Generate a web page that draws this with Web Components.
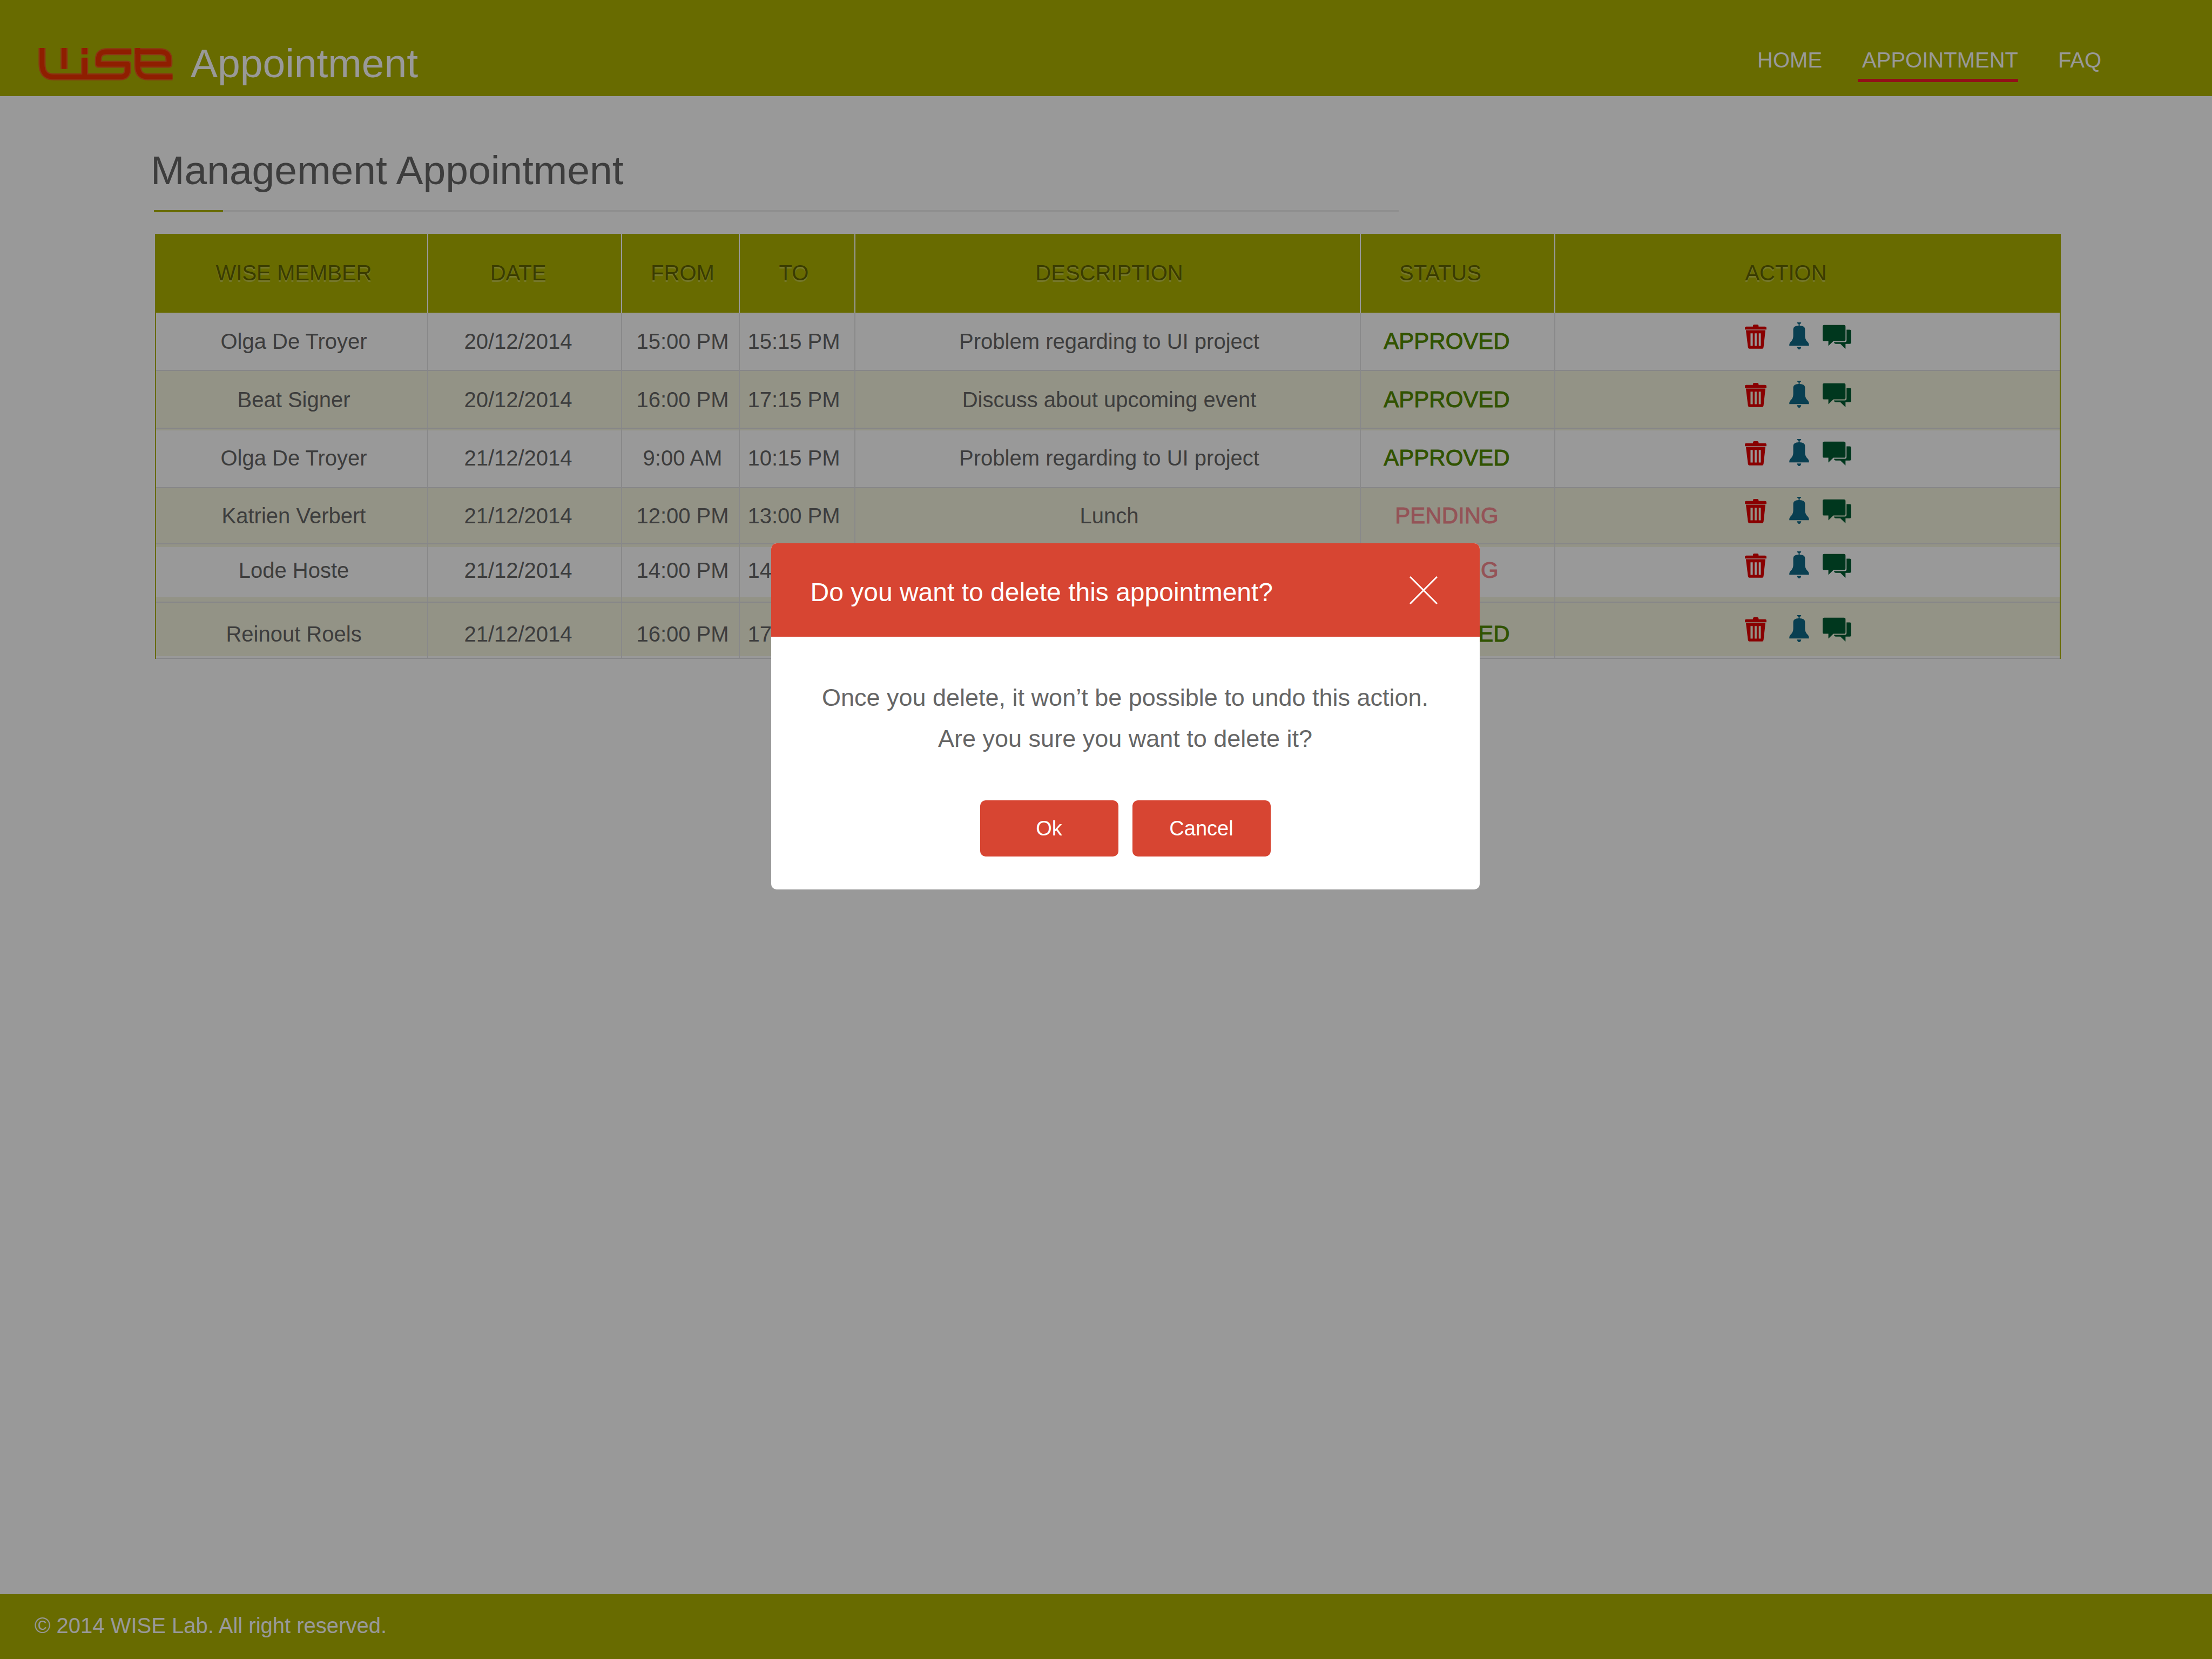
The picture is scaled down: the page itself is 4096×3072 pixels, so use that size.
<!DOCTYPE html>
<html lang="en">
<head>
<meta charset="utf-8">
<meta name="viewport" content="width=device-width, initial-scale=1">
<title>WISE Appointment</title>
<style>
  html, body { margin: 0; }
  body {
    font-family: "Liberation Sans", Arial, Helvetica, sans-serif;
    font-size: 40px;
    color: #666;
    background: #fff;
    --olive: #adb300;
    --red: #d74532;
  }
</style>
</head>
<body>

<wise-app>
  <wise-header slot="header">
    <wise-nav-link href="#home">HOME</wise-nav-link>
    <wise-nav-link href="#appointment" active>APPOINTMENT</wise-nav-link>
    <wise-nav-link href="#faq">FAQ</wise-nav-link>
  </wise-header>
  <section-title>Management Appointment</section-title>
  <appointment-table></appointment-table>
  <wise-footer slot="footer">© 2014 WISE Lab. All right reserved.</wise-footer>
</wise-app>

<confirm-dialog>
  <span slot="title">Do you want to delete this appointment?</span>
  <p-line>Once you delete, it won’t be possible to undo this action.</p-line>
  <p-line>Are you sure you want to delete it?</p-line>
  <wise-button slot="actions">Ok</wise-button>
  <wise-button slot="actions">Cancel</wise-button>
</confirm-dialog>

<script>
  const define = (name, html, setup) => {
    const template = document.createElement('template');
    template.innerHTML = html;
    customElements.define(name, class extends HTMLElement {
      constructor() {
        super();
        this.attachShadow({ mode: 'open' }).append(template.content.cloneNode(true));
      }
      connectedCallback() { if (setup) setup(this, this.shadowRoot); }
    });
  };

  define('wise-app', `
    <style>
      :host { display: flex; flex-direction: column; min-height: 100vh; }
      main { flex: 1; padding: 92px 280px 0 287px; }
    </style>
    <slot name="header"></slot>
    <main><slot></slot></main>
    <slot name="footer"></slot>`);

  define('wise-logo', `
    <style>
      :host { display: block; padding-top: 4px; }
      svg { display: block; width: 249px; height: 60px; }
    </style>
    <svg viewBox="30 24 777 188" role="img" aria-label="WISE">
      <defs>
        <g id="mark" fill="none" stroke-linejoin="round">
          <path d="M50 24V115Q50 191 115 191H505Q547 191 547 145V118H377V90Q377 45 425 45H568"/>
          <path d="M178 24V145"/>
          <path d="M297 80V191"/>
          <path d="M297 24V60"/>
          <path d="M605 24V125Q605 191 665 191H807"/>
          <path d="M590 45H735Q786 45 786 95V118H605"/>
        </g>
      </defs>
      <use href="#mark" stroke="#e85a1e" stroke-width="41"/>
      <use href="#mark" stroke="#ee3300" stroke-width="27"/>
    </svg>`);

  define('wise-header', `
    <style>
      :host {
        display: flex; justify-content: space-between; align-items: center;
        box-sizing: border-box; height: 178px;
        padding: 56px 205px 0 71px;
        background: var(--olive); color: #fff;
      }
      .brand { display: flex; align-items: center; gap: 33px; font-size: 75px; line-height: 80px; }
      nav { display: flex; gap: 66px; padding-top: 4px; }
    </style>
    <div class="brand"><wise-logo></wise-logo><span>Appointment</span></div>
    <nav><slot></slot></nav>`);

  define('wise-nav-link', `
    <style>
      :host { display: block; }
      a {
        display: block; padding: 0 0 11px 8px;
        font-size: 40px; line-height: 48px;
        color: #fff; text-decoration: none;
        border-bottom: 6px solid transparent;
      }
      :host([active]) a { border-color: #f41c28; }
    </style>
    <a><slot></slot></a>`, (host, root) => {
      root.querySelector('a').href = host.getAttribute('href');
    });

  define('section-title', `
    <style>
      :host { display: block; margin-bottom: 40px; }
      h1 { margin: 0 0 29px -8px; font-size: 75px; line-height: 90px; font-weight: 400; }
      .rule { max-width: 2305px; margin-left: -2px; height: 4px; background: #efefef; }
      .rule::before { content: ""; display: block; width: 128px; height: 4px; background: var(--olive); }
    </style>
    <h1><slot></slot></h1>
    <div class="rule"></div>`);

  define('row-actions', `
    <style>
      :host { display: flex; align-items: center; justify-content: center; padding-bottom: 20px; }
      button { display: block; margin: 0; padding: 0; border: 0; background: none; cursor: pointer; }
      svg { display: block; height: 50px; }
      .trash { margin-right: 42px; }
      .trash svg { width: 40px; }
      .bell { margin-right: 25px; }
      .bell svg { width: 37px; }
      .chat svg { width: 53px; }
    </style>
    <button class="trash" type="button" aria-label="Delete">
      <svg viewBox="51 39 126 156" fill="#e40000">
        <path d="M98 63V57Q99 51 105 51H124Q130 51 131 57V63H169Q177 63 177 70V80H51V70Q51 63 59 63Z"/>
        <path fill-rule="evenodd" d="M57 84H171L160 182Q158 192 149 192H80Q71 192 69 182ZM84 102V175H97V102ZM108 102V175H120V102ZM132 102V175H144V102Z"/>
      </svg>
    </button>
    <button class="bell" type="button" aria-label="Remind">
      <svg viewBox="306 39 114 156" fill="#0f6a88">
        <path d="M351 39H375Q375 46 366 50V58Q396 59 397 78V115C397 138 406 146 415 155Q420 160 420 174H306Q306 160 311 155C320 146 329 138 329 115V78Q330 59 360 58V50Q351 46 351 39Z"/>
        <path d="M351 180H375Q373 195 363 195Q353 195 351 180Z"/>
      </svg>
    </button>
    <button class="chat" type="button" aria-label="Comment">
      <svg viewBox="498 39 165 156" fill="#005c33">
        <path d="M507 54H621Q630 54 630 63V138Q630 147 621 147H560L531 175V147H507Q498 147 498 138V63Q498 54 507 54Z"/>
        <path d="M636 81H654Q663 81 663 90V154Q663 163 654 163H630V192L600 163H574Q566 163 563 153H626Q636 153 636 143Z"/>
      </svg>
    </button>`);

  define('status-badge', `
    <style>
      :host { font-size: 42px; -webkit-text-stroke: 1px currentColor; color: #528a00; }
      :host([kind="PENDING"]) { color: #f78b92; }
    </style>
    <slot></slot>`);

  const appointments = [
    ['Olga De Troyer', '20/12/2014', '15:00 PM', '15:15 PM', 'Problem regarding to UI project', 'APPROVED'],
    ['Beat Signer', '20/12/2014', '16:00 PM', '17:15 PM', 'Discuss about upcoming event', 'APPROVED'],
    ['Olga De Troyer', '21/12/2014', '9:00 AM', '10:15 PM', 'Problem regarding to UI project', 'APPROVED'],
    ['Katrien Verbert', '21/12/2014', '12:00 PM', '13:00 PM', 'Lunch', 'PENDING'],
    ['Lode Hoste', '21/12/2014', '14:00 PM', '14:15 PM', '', 'PENDING'],
    ['Reinout Roels', '21/12/2014', '16:00 PM', '17:15 PM', '', 'APPROVED']
  ];

  define('appointment-table', `
    <style>
      :host { display: block; --stripe: #f6f5df; }
      table {
        width: 100%; table-layout: fixed; border-collapse: separate; border-spacing: 0;
        box-sizing: border-box; border: solid var(--olive); border-width: 0 2px;
        font-size: 40px; line-height: 46px;
      }
      th, td { box-sizing: border-box; padding: 0; text-align: center; vertical-align: middle; white-space: nowrap; font-weight: 400; }
      th {
        height: 146px; padding-bottom: 3px; background: var(--olive); color: #626400;
        border-right: 2px solid #fff; text-shadow: 0 3px 1px rgba(255, 255, 255, .3);
      }
      td { border-right: 2px solid #e4e4e6; border-bottom: 2px solid #e0e0e3; }
      th:last-child, td:last-child { border-right: 0; }
      .member { width: 504px; padding-left: 8px; }
      .date { width: 359px; padding-right: 24px; }
      .from { width: 218px; padding-left: 8px; }
      .to { width: 214px; padding-right: 12px; }
      .text { width: 936px; padding-left: 6px; }
      .status { width: 360px; padding-right: 40px; }
      th.status { padding-right: 64px; }
      .action { padding-right: 36px; }
      th.action { padding-right: 80px; }
      tr:nth-child(1) td { height: 108px; }
      tr:nth-child(2) td { height: 107px; }
      tr:nth-child(3) td { height: 110px; }
      tr:nth-child(4) td { height: 104px; }
      tr:nth-child(5) td { height: 108px; padding-bottom: 10px; }
      tr:nth-child(6) td { height: 104px; padding-top: 14px; }
      tbody tr:nth-child(even) { background: var(--stripe); }
      tbody tr:nth-child(3) { background: linear-gradient(var(--stripe) 3px, transparent 3px); }
      tbody tr:nth-child(5) { background: linear-gradient(var(--stripe) 5px, transparent 5px 98px, var(--stripe) 98px); }
      tbody tr:nth-child(6) { background: linear-gradient(var(--stripe) 99px, transparent 99px); }
    </style>
    <table>
      <thead>
        <tr>
          <th class="member" scope="col">WISE MEMBER</th>
          <th class="date" scope="col">DATE</th>
          <th class="from" scope="col">FROM</th>
          <th class="to" scope="col">TO</th>
          <th class="text" scope="col">DESCRIPTION</th>
          <th class="status" scope="col">STATUS</th>
          <th class="action" scope="col">ACTION</th>
        </tr>
      </thead>
      <tbody></tbody>
    </table>`, (host, root) => {
      const columns = ['member', 'date', 'from', 'to', 'text'];
      root.querySelector('tbody').innerHTML = appointments.map(row => `
        <tr>
          ${columns.map((name, i) => `<td class="${name}">${row[i]}</td>`).join('')}
          <td class="status"><status-badge kind="${row[5]}">${row[5]}</status-badge></td>
          <td class="action"><row-actions></row-actions></td>
        </tr>`).join('');
    });

  define('wise-footer', `
    <style>
      :host {
        display: flex; align-items: center; box-sizing: border-box;
        height: 120px; padding: 0 64px 4px;
        background: var(--olive); color: #fff; font-size: 40px; line-height: 46px;
      }
    </style>
    <slot></slot>`);

  define('wise-button', `
    <style>
      :host { display: block; }
      button {
        display: block; width: 256px; height: 104px; padding: 0; border: 0; border-radius: 10px;
        background: var(--red); color: #fff; font: inherit; font-size: 38px; cursor: pointer;
      }
    </style>
    <button type="button"><slot></slot></button>`);

  define('p-line', `
    <style>:host { display: block; font-size: 45px; line-height: 76px; text-align: center; }</style>
    <slot></slot>`);

  define('confirm-dialog', `
    <style>
      :host {
        position: fixed; inset: 0; box-sizing: border-box;
        display: flex; justify-content: center; align-items: flex-start;
        padding: 1006px 0 0 71px; background: rgba(0, 0, 0, .4);
      }
      .dialog { width: 1312px; border-radius: 10px; overflow: hidden; background: #fff; }
      header {
        display: flex; justify-content: space-between; align-items: center;
        height: 173px; padding: 0 78px 0 73px; background: var(--red); color: #fff;
      }
      h2 { margin: 0; padding-top: 8px; font-size: 48px; line-height: 56px; font-weight: 400; }
      .close { display: block; padding: 0; border: 0; background: none; cursor: pointer; }
      .close svg { display: block; width: 52px; height: 52px; }
      .message { padding: 75px 0 76px; }
      .actions { display: flex; justify-content: center; gap: 26px; padding-bottom: 61px; }
    </style>
    <div class="dialog" role="dialog" aria-modal="true" aria-labelledby="title">
      <header>
        <h2 id="title"><slot name="title"></slot></h2>
        <button class="close" type="button" aria-label="Close">
          <svg viewBox="0 0 52 52" fill="none" stroke="#fff" stroke-width="3"><path d="M1 1L51 51M51 1L1 51"/></svg>
        </button>
      </header>
      <div class="message"><slot></slot></div>
      <div class="actions"><slot name="actions"></slot></div>
    </div>`);
</script>
</body>
</html>
